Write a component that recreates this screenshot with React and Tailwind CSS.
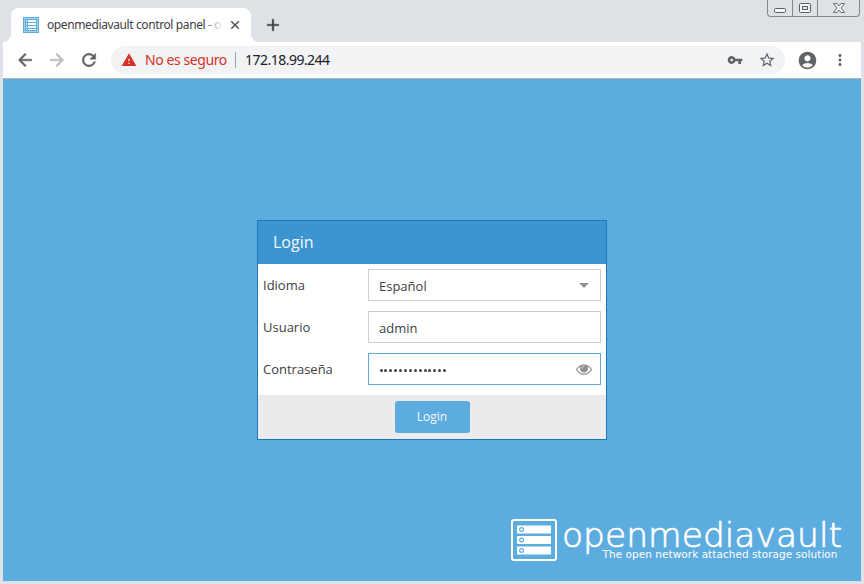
import React from "react";
import { MdWarning, MdVpnKey, MdStarBorder, MdAccountCircle, MdMoreVert } from "react-icons/md";

const GLYPHS = {
  back: "M20 11H7.830l5.590-5.590L12 4l-8 8 8 8 1.410-1.410L7.830 13H20v-2z",
  forward: "M12 4l-1.410 1.410L16.170 11H4v2h12.170l-5.580 5.590L12 20l8-8z",
  reload:
    "M17.650 6.350A7.958 7.958 0 0012 4c-4.420 0-7.990 3.580-7.990 8s3.570 8 7.990 8c3.730 0 6.840-2.550 7.730-6h-2.080A5.990 5.990 0 0112 18c-3.310 0-6-2.690-6-6s2.690-6 6-6c1.660 0 3.140.690 4.220 1.780L13 11h7V4l-2.350 2.350z",
  close: "M19 6.410L17.590 5 12 10.590 6.410 5 5 6.410 10.590 12 5 17.590 6.410 19 12 13.410 17.590 19 19 17.590 13.410 12z",
  plus: "M19 13h-6v6h-2v-6H5v-2h6V5h2v6h6v2z",
};

function Glyph({ name, size = 20, weight = 0.6, className = "" }) {
  return (
    <svg
      width={size}
      height={size}
      viewBox="0 0 24 24"
      fill="currentColor"
      stroke="currentColor"
      strokeWidth={weight}
      className={"shrink-0 " + className}
    >
      <path d={GLYPHS[name]} />
    </svg>
  );
}

function Favicon() {
  return (
    <svg width="16" height="16" viewBox="0 0 16 16" className="shrink-0" shapeRendering="crispEdges">
      <rect width="16" height="16" fill="#5dacdf" />
      <rect x="1" y="1" width="14" height="14" fill="#a5d0ee" />
      <rect x="2" y="2" width="12" height="12" fill="#5dacdf" />
      {[3, 6, 9, 12].map((y) => (
        <g key={y}>
          <rect x="3" y={y} width="1" height={y === 12 ? 1 : 2} fill="#d9ecf8" />
          <rect x="5" y={y} width="8" height={y === 12 ? 1 : 2} fill="#fff" />
        </g>
      ))}
    </svg>
  );
}

function WindowButtons() {
  return (
    <div className="flex h-[17px] w-[93px] shrink-0 rounded-b-[4px] border border-t-0 border-[#85888b]">
      <div className="flex w-[25px] justify-center border-r border-[#85888b] pt-[8px]">
        <svg width="12" height="5" viewBox="0 0 12 5">
          <rect x="0.5" y="0.5" width="11" height="4" rx="1" fill="#f4f5f6" stroke="#5c5f63" />
        </svg>
      </div>
      <div className="flex w-[25px] justify-center border-r border-[#85888b] pt-[3px]">
        <svg width="12" height="10" viewBox="0 0 12 10">
          <rect x="0.5" y="0.5" width="11" height="9" rx="1" fill="#f4f5f6" stroke="#5c5f63" />
          <rect x="3.5" y="3.5" width="5" height="3" fill="#dee1e6" stroke="#5c5f63" />
        </svg>
      </div>
      <div className="flex flex-1 justify-center pt-[3px]">
        <svg width="12" height="10" viewBox="0 0 12 10">
          <path
            d="M.5.5H4L6 3 8 .5h3.5L8 5l3.5 4.500H8L6 7 4 9.500H.5L4 5z"
            fill="#f4f5f6"
            stroke="#5c5f63"
            strokeWidth="0.9"
          />
        </svg>
      </div>
    </div>
  );
}

function TabStrip() {
  return (
    <div className="flex h-[42px] items-start bg-[#dee1e6]">
      <div className="mt-[8px] flex h-[34px] items-end">
        <div className="h-2 w-2 bg-white">
          <div className="h-2 w-2 rounded-br-lg bg-[#dee1e6]" />
        </div>
        <div className="flex h-[34px] w-[240px] items-center rounded-t-lg bg-white pl-3">
          <Favicon />
          <div className="relative ml-2 w-[176px] overflow-hidden whitespace-nowrap text-[12px] leading-[18px] tracking-[-0.39px] text-[#3c4043]">
            openmediavault control panel - o
            <div className="absolute inset-y-0 right-0 w-[16px] bg-linear-to-r from-white/20 to-white" />
          </div>
          <Glyph name="close" size={14} weight={0.7} className="ml-[5px] text-[#4b4f53]" />
        </div>
        <div className="h-2 w-2 bg-white">
          <div className="h-2 w-2 rounded-bl-lg bg-[#dee1e6]" />
        </div>
      </div>
      <Glyph name="plus" weight={0.4} className="mt-[15px] ml-[4px] text-[#3c4043]" />
      <div className="flex-1" />
      <div className="mr-[1px]">
        <WindowButtons />
      </div>
    </div>
  );
}

function Toolbar() {
  return (
    <div className="flex h-[37px] items-center border-b border-[#b0b2b5] bg-white text-[#5f6368]">
      <Glyph name="back" className="ml-[12px]" />
      <Glyph name="forward" className="ml-[12px] text-[#b9bbbe]" />
      <Glyph name="reload" className="ml-[12px]" />
      <div className="ml-[12px] flex h-[28px] w-[674px] items-center rounded-full bg-[#f1f3f4]">
        <MdWarning size={16} className="ml-[10px] text-[#d93025]" />
        <span className="ml-[8px] w-[83px] whitespace-nowrap text-[14px] leading-[20px] tracking-[-0.42px] text-[#d93025]">
          No es seguro
        </span>
        <div className="ml-[7px] h-4 w-px bg-[#9aa0a6]" />
        <span className="ml-[9px] whitespace-nowrap text-[14px] leading-[20px] tracking-[-0.52px] text-[#202124]">
          172.18.99.244
        </span>
        <div className="flex-1" />
        <MdVpnKey size={16} />
        <MdStarBorder size={18} className="mr-[9px] ml-[15px]" />
      </div>
      <MdAccountCircle size={21} className="ml-[11.5px]" />
      <MdMoreVert size={18} className="ml-[13px]" />
    </div>
  );
}

function EyeIcon() {
  return (
    <svg width="16" height="16" viewBox="0 0 1792 1792" fill="#919191">
      <path d="M1664 960q-152-236-381-353 61 104 61 225 0 185-131.5 316.5t-316.5 131.5-316.5-131.5-131.5-316.5q0-121 61-225-229 117-381 353 133 205 333.5 326.5t434.5 121.5 434.5-121.5 333.5-326.5zm-720-384q0-20-14-34t-34-14q-125 0-214.5 89.5t-89.5 214.5q0 20 14 34t34 14 34-14 14-34q0-86 61-147t147-61q20 0 34-14t14-34zm848 384q0 34-20 69-140 230-376.5 368.5t-499.5 138.5-499.5-139-376.5-368q-20-35-20-69t20-69q140-229 376.5-368t499.5-139 499.5 139 376.5 368q20 35 20 69z" />
      <circle cx="896" cy="832" r="400" />
      <path
        d="M640 832a256 256 0 0 1 256-256"
        fill="none"
        stroke="#e4e4e4"
        strokeWidth="90"
        strokeLinecap="round"
      />
    </svg>
  );
}

function Field({ label, focused, children }) {
  return (
    <div className="flex h-8 items-center">
      <span className="w-[105px] shrink-0 pt-[2px] text-[13px] text-[#404040]">{label}</span>
      <div
        className={
          "flex h-8 w-[233px] items-center justify-between border bg-white pr-2 pl-[10px] text-[13px] text-[#404040] " +
          (focused ? "border-[#5fa8dc]" : "border-[#cfcfcf]")
        }
      >
        {children}
      </div>
    </div>
  );
}

function LoginDialog() {
  return (
    <div className="mt-[141px] h-[220px] w-[350px] border border-[#1e78b8] bg-white font-['Open_Sans',sans-serif]">
      <div className="flex h-[43px] items-center bg-[#3c94d0] pb-[2px] pl-[15px] text-[16px] text-[#f4f8fb]">Login</div>
      <div className="flex h-[131px] flex-col gap-[10px] pt-[5px] pl-[5px]">
        <Field label="Idioma">
          <span className="pt-[4px]">Español</span>
          <svg width="10" height="5" viewBox="0 0 10 5" className="mr-[3px]">
            <path d="M0 0h10L5 5z" fill="#919191" />
          </svg>
        </Field>
        <Field label="Usuario">
          <span className="pt-[4px]">admin</span>
        </Field>
        <Field label="Contraseña" focused>
          <div className="flex gap-[1.9px] pt-[3px] pl-[0.5px]">
            {Array.from({ length: 14 }, (_, i) => (
              <i key={i} className="h-[3px] w-[3px] rounded-full bg-[#404040]" />
            ))}
          </div>
          <EyeIcon />
        </Field>
      </div>
      <div className="flex h-[44px] items-center justify-center bg-[#ebebeb]">
        <button className="h-8 w-[75px] rounded-[3px] bg-[#5dacdf] text-[12px] text-[#f4f8fb]">Login</button>
      </div>
    </div>
  );
}

function Logo() {
  return (
    <svg width="334" height="46" viewBox="0 0 334 46" className="mr-[17px] mb-[18px] self-end overflow-visible" fill="#fff">
      <rect x="2" y="3" width="44" height="40" rx="2" fill="none" stroke="#fff" strokeWidth="2" />
      {[9, 19.5, 30].map((y) => (
        <g key={y}>
          <rect x="7" y={y - 0.5} width="34" height="8" />
          <circle cx="11.6" cy={y + 3.5} r="1.9" fill="none" stroke="#5dacdf" strokeWidth="1.2" />
        </g>
      ))}
      <text
        x="52"
        y="29.5"
        fontFamily="DejaVu Sans, sans-serif"
        fontWeight="200"
        fontSize="34.5"
        stroke="#fff"
        strokeWidth="0.7"
        textLength="280"
        lengthAdjust="spacingAndGlyphs"
      >
        openmediavault
      </text>
      <text x="92.5" y="41" fontFamily="DejaVu Sans, sans-serif" fontSize="10.5" textLength="235">
        The open network attached storage solution
      </text>
    </svg>
  );
}

export default function App() {
  return (
    <div className="h-[584px] w-[864px] overflow-hidden bg-[#dee1e6] px-[3px] pb-[3px] font-['Noto_Sans',sans-serif]">
      <TabStrip />
      <Toolbar />
      <div className="flex h-[502px] flex-col items-center justify-between bg-[#5dacdf]">
        <LoginDialog />
        <Logo />
      </div>
    </div>
  );
}
